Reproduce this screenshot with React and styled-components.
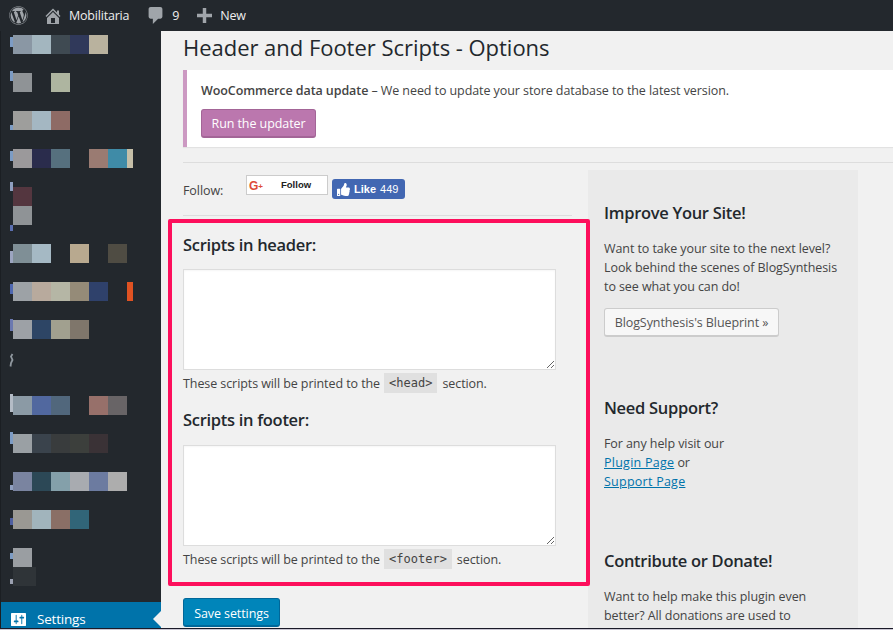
import React from "react";
import styled, { createGlobalStyle } from "styled-components";
import { FaWordpress, FaThumbsUp } from "react-icons/fa";

const Global = createGlobalStyle`
  html, body { margin: 0; padding: 0; height: 630px; overflow: hidden; background: #f1f1f1; }
  * { box-sizing: border-box; }
  body { font-family: "Open Sans", "Noto Sans", "Liberation Sans", sans-serif; font-size: 12.5px; letter-spacing: -0.08px; color: #444; }
`;

const Page = styled.div`
  width: 893px; height: 630px; display: flex; flex-direction: column; overflow: hidden;
`;
const TopBar = styled.header`
  height: 31px; flex: none; background: #23282d; display: flex; align-items: center; padding-left: 9px; color: #eee; letter-spacing: -0.2px;
`;
const BarItem = styled.div`
  display: flex; align-items: center; gap: ${p => p.$gap}px; margin-right: ${p => p.$after}px; font-size: 12.5px; line-height: 31px;
  svg { flex: none; color: #a0a5aa; fill: #a0a5aa; }
`;
const Body = styled.div`
  flex: 1; display: flex; min-height: 0; overflow: hidden;
`;
const Side = styled.nav`
  width: 161px; flex: none; background: #23282d; border-left: 1px solid #1b1f23; padding-top: 4px; display: flex; flex-direction: column;
`;
const MenuItem = styled.div`
  height: ${p => p.$h || 38}px; flex: none; display: flex; flex-direction: column; padding-left: 12px;
`;
const PixelRow = styled.div`
  display: flex; height: 19px; position: relative; flex: none;
`;
const Pixel = styled.span`
  width: ${p => p.$w || 19}px; height: 19px; flex: none; background: ${p => p.$c || "transparent"};
`;
const Stub = styled.span`
  position: absolute; left: -3px; top: ${p => p.$t}px; width: 3px; height: ${p => p.$h}px; background: ${p => p.$c};
`;
const Squiggle = styled.svg`
  position: absolute; left: -4px; top: -5px;
`;
const Current = styled.div`
  margin-top: auto; height: 26px; background: #0073aa; color: #fff; display: flex; align-items: flex-start; padding: 8px 0 0 10px; gap: 11px; position: relative; font-size: 13.5px; line-height: 18px; letter-spacing: -0.2px; flex: none;
  svg { fill: #fff; flex: none; margin-top: 2px; }
  &::after {
    content: ""; position: absolute; right: 0; top: 9px; border: 8px solid transparent; border-right-color: #f1f1f1; border-left-width: 0;
  }
`;
const Main = styled.main`
  flex: 1; min-width: 0; padding-left: 22px; overflow: hidden;
`;
const Title = styled.h1`
  margin: -1px 0 6px; font-size: 22px; font-weight: 400; line-height: 34px; color: #23282d; letter-spacing: -0.03px;
`;
const Notice = styled.div`
  background: #fff; border-left: 4px solid #cc99c2; box-shadow: 0 1px 1px rgba(0,0,0,.06); padding: 11px 14px 9px; height: 77px;
  p { margin: 0 0 9px; line-height: 19px; color: #444; }
  strong { font-weight: 600; }
`;
const Rule = styled.hr`
  border: 0; border-top: 1px solid #ddd; margin: ${p => p.$top || 0}px 0 0;
`;
const Columns = styled.div`
  display: flex; align-items: flex-start;
`;
const LeftCol = styled.div`
  width: 405px; flex: none;
`;
const FollowRow = styled.div`
  height: 53px; width: 389px; display: flex; align-items: flex-start; padding-top: 12px; border-bottom: 1px solid #ddd;
`;
const FollowLabel = styled.span`
  margin-top: 7px; width: 63px; flex: none; color: #444;
`;
const GPlus = styled.div`
  width: 82px; height: 20px; background: #fff; border: 1px solid #ccc; display: flex; align-items: center; font: bold 9.5px "Liberation Sans", sans-serif; letter-spacing: 0; color: #222; padding-left: 2px;
  i { color: #dd4b39; font-style: normal; font-size: 12px; width: 32px; padding-top: 1px; }
  i small { font-size: 8px; vertical-align: 1px; }
  b { margin-top: -1px; }
`;
const Like = styled.div`
  width: 73px; height: 20px; margin: 4px 0 0 4px; background: #4267b2; border-radius: 3px; color: #fff; display: flex; align-items: center; gap: 4px; padding-left: 5px; font: bold 11px "Liberation Sans", sans-serif; letter-spacing: 0;
  em { font-style: normal; font-weight: 400; }
`;
const Highlight = styled.section`
  position: relative; z-index: 1; margin: 3px 0 0 -15px; width: 422px; height: 367px; border: 4px solid #fd0f5c; border-radius: 2px; padding: 11px 0 0 11px;
`;
const H2 = styled.h2`
  margin: 0; font-size: 16.5px; font-weight: 600; line-height: 22px; color: #23282d; letter-spacing: -0.3px;
`;
const Area = styled.textarea`
  display: block; width: 373px; height: 101px; margin: ${p => p.$top}px 0 3px; background: #fff; border: 1px solid #ddd; border-radius: 0; box-shadow: inset 0 1px 2px rgba(0,0,0,.04); outline: 0;
`;
const Help = styled.p`
  margin: 0 0 16px; height: 20px; line-height: 21px; display: flex; color: #444;
  code { background: #e0e0e0; margin: 0 5px 0 4px; padding: 0 5px; font: 12px/20px "DejaVu Sans Mono", monospace; letter-spacing: 0; color: #444; }
`;
const Save = styled.button`
  display: block; margin-top: 12px; width: 97px; height: 29px; background: #0085ba; border: 1px solid #006799; border-bottom-width: 2px; border-radius: 3px; color: #fff; font: inherit; letter-spacing: inherit; padding: 2px 0 0;
`;
const Panel = styled.aside`
  width: 270px; flex: none; margin-top: 7px; height: 470px; background: #eaeaea; padding: 32px 16px 0;
`;
const H3 = styled.h3`
  margin: 0 0 15px; font-size: 16.5px; font-weight: 600; line-height: 22px; color: #23282d; letter-spacing: -0.3px;
`;
const Para = styled.p`
  margin: 0; line-height: 19px; color: #444;
  a { color: #0073aa; text-decoration: underline; font-weight: 500; letter-spacing: 0.25px; }
`;
const Plain = styled.div`
  margin: 12px 0 0; width: 175px; height: 29px; line-height: 27px; text-align: center; background: #f7f7f7; border: 1px solid #ccc; border-bottom-width: 2px; border-radius: 3px; color: #555;
`;
const Block = styled.div`
  margin-bottom: ${p => p.$after}px;
`;
const Edge = styled.div`
  height: 2px; flex: none; background: linear-gradient(#1a1a28 50%, #c9c6d2 50%);
`;
const RunBtn = styled.div`
  width: 115px; height: 29px; line-height: 27px; text-align: center; background: #bb77ae; border: 1px solid #a36597; border-bottom-width: 2px; border-radius: 3px; color: #fff;
`;

const rows = [
  { h: 38, stub: ["#7d9cc4", 2, 10], cells: [["#8a97a4"], ["#a3b6bf"], ["#3f4a52"], ["#30395a"], ["#b9b29e"]] },
  { h: 38, stub: ["#7d9cc4", -2, 10], cells: [["#8f9396"], [], ["#aeb5a0"]] },
  { h: 38, stub: ["#7d9cc4", 14, 5], cells: [["#9e9e9c"], ["#a4b7c2"], ["#8e6b65"]] },
  { h: 38, stub: ["#7d9cc4", 2, 10], cells: [["#9b999b"], ["#2a2c4c"], ["#56707e"], [], ["#9a7b72"], ["#3f8ba7"], ["#c5bfa8", 6]] },
  { h: 19, stub: ["#8f9fc0", -5, 9], cells: [["#54363f"]] },
  { h: 38, stub: ["#5b6fb0", 19, 6], cells: [["#8f9396"]] },
  { h: 38, stub: ["#9ca5c0", 7, 12], cells: [["#7f8f96"], ["#a5b9c4"], [], ["#b8a98f"], [], ["#4f4c43"]] },
  { h: 38, stub: ["#4f68b0", 2, 10], cells: [["#9da2a6"], ["#b8aa9d"], ["#b5b6a5"], ["#958b78"], ["#2f416b"], [], ["#df5222", 6]] },
  { h: 38, stub: ["#6b79b0", -1, 12], cells: [["#9da1a6"], ["#2d4565"], ["#a1a08f"], ["#7f766b"]] },
  { h: 38, squiggle: true, cells: [] },
  { h: 38, stub: ["#b4bcc6", -2, 18], cells: [["#8b9aa5"], ["#51689f"], ["#51677c"], [], ["#97706a"], ["#686466"]] },
  { h: 38, stub: ["#7d9cc4", -2, 12], cells: [["#9aa0a4"], ["#3a434c"], ["#393c3d"], ["#3c3f3c"], ["#3a3236"]] },
  { h: 38, stub: ["#8f9fc0", 13, 5], cells: [["#7a84a0"], ["#2c4856"], ["#84a0aa"], ["#a8abb0"], ["#6c7ba0"], ["#adadad"]] },
  { h: 38, stub: ["#4f5fa0", 8, 7], cells: [["#9a9893"], ["#a1b4bc"], ["#8a6f66"], ["#316578"]] },
  { h: 19, stub: ["#7d9cc4", 5, 6], cells: [["#9a9ea2"]] },
  { h: 19, stub: ["#9aa0b0", 12, 5], cells: [["#2f3438", 23]] },
];

export default function App() {
  return (
    <Page>
      <Global />
      <TopBar>
        <BarItem $gap={0} $after={17}><FaWordpress size={19} /></BarItem>
        <BarItem $gap={8} $after={19}>
          <svg width="16" height="16" viewBox="2 2 16 16"><path d="M16 8.5l1.53 1.53-1.06 1.06L10 4.62l-6.47 6.47-1.06-1.06L10 2.5l4 4v-2h2v4zm-6-2.46l6 5.99V18H4v-5.97zM12 17v-5H8v5h4z" /></svg>
          Mobilitaria
        </BarItem>
        <BarItem $gap={9} $after={18}>
          <svg width="15" height="17" viewBox="3 2 13 16"><path d="M5 2h9c1.1 0 2 .9 2 2v7c0 1.100-.9 2-2 2h-2l-5 5v-5H5c-1.100 0-2-.9-2-2V4c0-1.100.9-2 2-2z" /></svg>
          9
        </BarItem>
        <BarItem $gap={8} $after={0}>
          <svg width="15" height="15" viewBox="4 2 13 13"><path d="M17 7v3h-5v5H9v-5H4V7h5V2h3v5h5z" /></svg>
          New
        </BarItem>
      </TopBar>
      <Body>
        <Side>
          {rows.map((r, i) => (
            <MenuItem key={i} $h={r.h}>
              <PixelRow>
                {r.stub && <Stub $c={r.stub[0]} $t={r.stub[1]} $h={r.stub[2]} />}
                {r.squiggle && (
                  <Squiggle width="5" height="15" viewBox="0 0 5 15">
                    <path d="M3.500 1 L2 3.500 L3.500 7 L2 10 L1.500 13.500" fill="none" stroke="#8f979e" strokeWidth="1.800" />
                  </Squiggle>
                )}
                {r.cells.map((c, j) => <Pixel key={j} $c={c[0]} $w={c[1]} />)}
              </PixelRow>
            </MenuItem>
          ))}
          <Current>
            <svg width="15" height="15" viewBox="2 3 16 14"><path fillRule="evenodd" d="M18 16V4c0-.55-.45-1-1-1H3c-.55 0-1 .45-1 1v12c0 .55.45 1 1 1h14c.55 0 1-.45 1-1zM8 11h1c.55 0 1 .45 1 1s-.45 1-1 1H8v1.500c0 .28-.22.5-.5.5s-.5-.22-.5-.5V13H6c-.55 0-1-.45-1-1s.45-1 1-1h1V5.500c0-.28.22-.5.5-.5s.5.22.5.5V11zm5-2h-1c-.55 0-1-.45-1-1s.45-1 1-1h1V5.500c0-.28.22-.5.5-.5s.5.22.5.5V7h1c.55 0 1 .45 1 1s-.45 1-1 1h-1v5.500c0 .28-.22.5-.5.5s-.5-.22-.5-.5V9z" /></svg>
            Settings
          </Current>
        </Side>
        <Main>
          <Title>Header and Footer Scripts - Options</Title>
          <Notice>
            <p><strong>WooCommerce data update</strong> – We need to update your store database to the latest version.</p>
            <RunBtn>Run the updater</RunBtn>
          </Notice>
          <Rule $top={15} />
          <Columns>
            <LeftCol>
              <FollowRow>
                <FollowLabel>Follow:</FollowLabel>
                <GPlus><i>G<small>+</small></i><b>Follow</b></GPlus>
                <Like><FaThumbsUp size={13} />Like <em>449</em></Like>
              </FollowRow>
              <Highlight>
                <H2>Scripts in header:</H2>
                <Area $top={13} />
                <Help>These scripts will be printed to the <code>&lt;head&gt;</code> section.</Help>
                <H2>Scripts in footer:</H2>
                <Area $top={14} />
                <Help>These scripts will be printed to the <code>&lt;footer&gt;</code> section.</Help>
              </Highlight>
              <Save>Save settings</Save>
            </LeftCol>
            <Panel>
              <Block $after={60}>
                <H3>Improve Your Site!</H3>
                <Para>Want to take your site to the next level?<br />Look behind the scenes of BlogSynthesis<br />to see what you can do!</Para>
                <Plain>BlogSynthesis's Blueprint »</Plain>
              </Block>
              <Block $after={59}>
                <H3>Need Support?</H3>
                <Para>For any help visit our<br /><a>Plugin Page</a> or<br /><a>Support Page</a></Para>
              </Block>
              <Block $after={0}>
                <H3>Contribute or Donate!</H3>
                <Para>Want to help make this plugin even<br />better? All donations are used to</Para>
              </Block>
            </Panel>
          </Columns>
        </Main>
      </Body>
      <Edge />
    </Page>
  );
}
